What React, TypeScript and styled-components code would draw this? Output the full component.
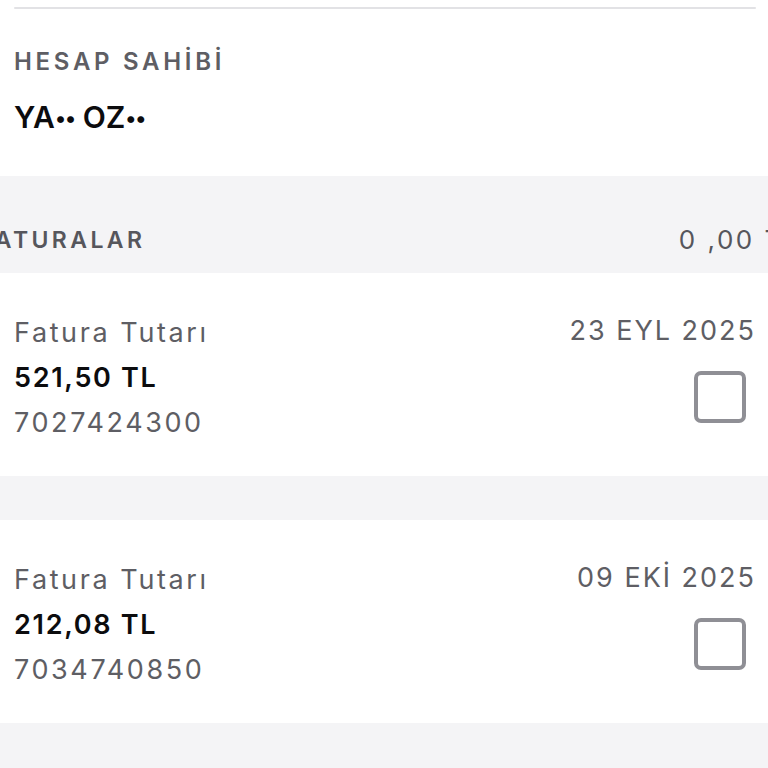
import React from "react";
import styled, { createGlobalStyle } from "styled-components";

const Global = createGlobalStyle`
  html, body { margin: 0; padding: 0; background: #f4f4f6; }
  body { font-family: "Inter", "Noto Sans", sans-serif; -webkit-font-smoothing: antialiased; }
`;

const Page = styled.div`
  width: 768px;
  min-height: 768px;
  overflow: hidden;
  background: #f4f4f6;
`;

const OwnerBlock = styled.section`
  background: #fff;
  height: 176px;
  padding: 7px 12px 0 14px;
  box-sizing: border-box;
`;

const Divider = styled.div`
  height: 2px;
  background: #e2e2e5;
  border-radius: 1px;
`;

const Label = styled.div`
  margin-top: 38px;
  font-size: 24px;
  font-weight: 600;
  letter-spacing: 3.7px;
  color: #5e5e64;
  line-height: 30px;
`;

const Owner = styled.div`
  margin-top: 22px;
  font-size: 30px;
  font-weight: 600;
  color: #0c0c0e;
  line-height: 36px;
`;

const Dots = styled.span`
  font-size: 22px;
  letter-spacing: -1px;
  vertical-align: 2px;
`;

const SectionHead = styled.div`
  height: 97px;
  display: flex;
  align-items: center;
  justify-content: space-between;
  margin-left: -20px;
  margin-right: -33px;
  padding-top: 30px;
  box-sizing: border-box;
  font-size: 23px;
  font-weight: 600;
  letter-spacing: 3.4px;
  color: #56565c;
`;

const Total = styled.span`
  font-size: 26px;
  font-weight: 400;
  letter-spacing: 2.5px;
`;

const Card = styled.div<{ $gap?: boolean }>`
  background: #fff;
  height: 203px;
  margin-top: ${(p) => (p.$gap ? "44px" : "0")};
  padding: 37px 14px 0 14px;
  box-sizing: border-box;
  display: flex;
  justify-content: space-between;
`;

const Info = styled.div`
  display: flex;
  flex-direction: column;
  font-size: 27px;
  line-height: 45px;
  letter-spacing: 2.6px;
  color: #5e5e64;
`;

const Amount = styled.span`
  font-weight: 600;
  letter-spacing: 1.7px;
  color: #0c0c0e;
`;

const Side = styled.div`
  display: flex;
  flex-direction: column;
  align-items: flex-end;
`;

const DateText = styled.span`
  font-size: 27px;
  line-height: 41px;
  letter-spacing: 2px;
  margin-right: -2px;
  color: #5e5e64;
`;

const Check = styled.div`
  margin-top: 20px;
  margin-right: 8px;
  width: 52px;
  height: 52px;
  box-sizing: border-box;
  border: 4px solid #8f8f95;
  border-radius: 7px;
`;

const bills = [
  { amount: "521,50 TL", no: "7027424300", date: "23 EYL 2025" },
  { amount: "212,08 TL", no: "7034740850", date: "09 EKİ 2025" },
];

export default function App() {
  return (
    <Page>
      <Global />
      <OwnerBlock>
        <Divider />
        <Label>HESAP SAHİBİ</Label>
        <Owner>
          YA<Dots>••</Dots> OZ<Dots>••</Dots>
        </Owner>
      </OwnerBlock>
      <SectionHead>
        <span>FATURALAR</span>
        <Total>0 ,00 TL</Total>
      </SectionHead>
      {bills.map((b, i) => (
        <Card key={b.no} $gap={i > 0}>
          <Info>
            <span>Fatura Tutarı</span>
            <Amount>{b.amount}</Amount>
            <span>{b.no}</span>
          </Info>
          <Side>
            <DateText>{b.date}</DateText>
            <Check />
          </Side>
        </Card>
      ))}
    </Page>
  );
}
